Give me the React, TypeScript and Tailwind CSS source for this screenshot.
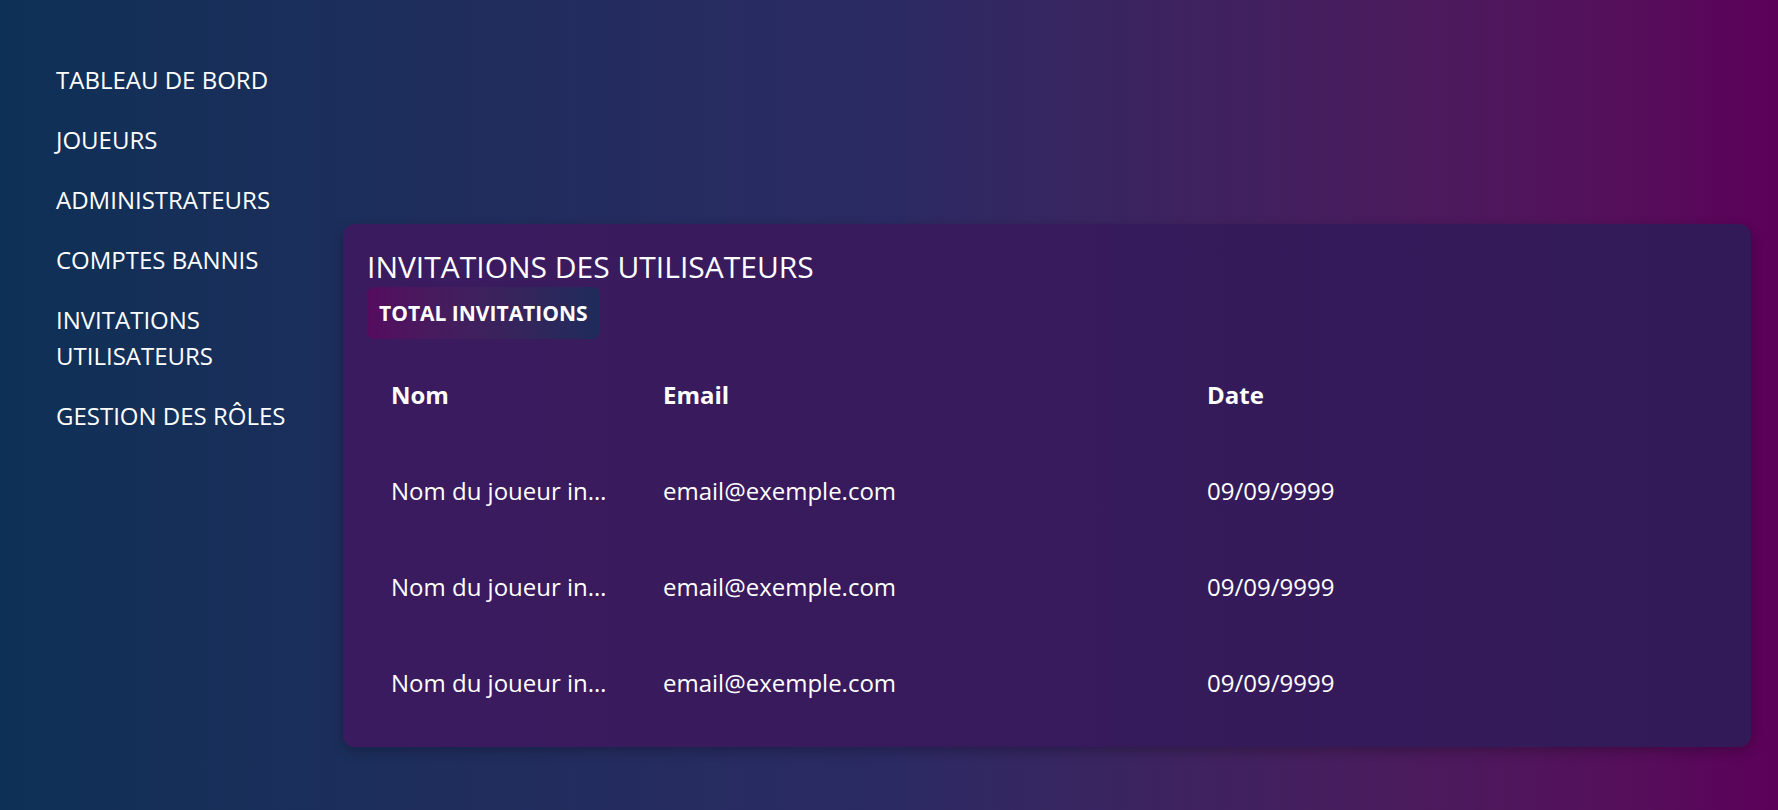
const menuItems = [
  "TABLEAU DE BORD",
  "JOUEURS",
  "ADMINISTRATEURS",
  "COMPTES BANNIS",
  "INVITATIONS UTILISATEURS",
  "GESTION DES RÔLES",
];

type Invitation = {
  id: number;
  name: string;
  email: string;
  date: string;
};

const invitations: Invitation[] = [
  { id: 1, name: "Nom du joueur invité", email: "email@exemple.com", date: "09/09/9999" },
  { id: 2, name: "Nom du joueur invité", email: "email@exemple.com", date: "09/09/9999" },
  { id: 3, name: "Nom du joueur invité", email: "email@exemple.com", date: "09/09/9999" },
];

const App = () => {
  return (
    <div className="min-h-[810px] w-full flex bg-linear-to-r from-[#0d3056] via-[#2b2a63] to-[#5c0059] text-white font-['Open_Sans',sans-serif]">
      <nav className="w-[343px] shrink-0 pl-[56px] pt-[62px] pr-6">
        <ul className="flex flex-col gap-6">
          {menuItems.map((item) => (
            <li key={item} className="text-2xl leading-9 w-[230px]">
              {item}
            </li>
          ))}
        </ul>
      </nav>

      <main className="flex-1 pt-[224px] pr-[27px] pb-10">
        <section className="rounded-xl bg-linear-to-r from-[#3b1b5f] to-[#321a58] px-6 pt-[25px] pb-4 shadow-[0_4px_12px_rgba(0,0,0,0.25)]">
          <h2 className="text-3xl leading-9">INVITATIONS DES UTILISATEURS</h2>
          <div className="inline-block mt-[2px] rounded-lg bg-linear-to-r from-[#550b5f] to-[#1d2b5b] px-3 py-3 text-[21px] leading-7 font-bold">
            TOTAL INVITATIONS
          </div>

          <table className="w-full table-fixed mt-2 text-2xl">
            <colgroup>
              <col className="w-[272px]" />
              <col />
              <col />
            </colgroup>
            <thead>
              <tr className="h-24">
                <th className="px-6 text-left font-bold">Nom</th>
                <th className="px-6 text-left font-bold">Email</th>
                <th className="px-6 text-left font-bold">Date</th>
              </tr>
            </thead>
            <tbody>
              {invitations.map((inv) => (
                <tr key={inv.id} className="h-24">
                  <td className="px-6 truncate">{inv.name}</td>
                  <td className="px-6">{inv.email}</td>
                  <td className="px-6">{inv.date}</td>
                </tr>
              ))}
            </tbody>
          </table>
        </section>
      </main>
    </div>
  );
};

export default App;
